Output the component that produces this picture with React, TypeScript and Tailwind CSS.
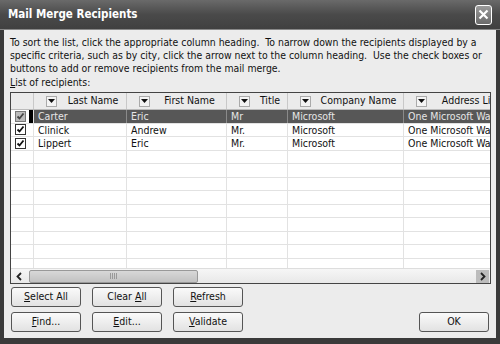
import React from "react";

const cols = [
  { w: "w-[93px]", label: "Last Name" },
  { w: "w-[100px]", label: "First Name" },
  { w: "w-[61px]", label: "Title" },
  { w: "w-[116px]", label: "Company Name" },
  { w: "w-[120px]", label: "Address Line 1" },
];

const rows = [
  ["Carter", "Eric", "Mr", "Microsoft", "One Microsoft Way"],
  ["Clinick", "Andrew", "Mr.", "Microsoft", "One Microsoft Way"],
  ["Lippert", "Eric", "Mr.", "Microsoft", "One Microsoft Way"],
];

function Check({ dim }: { dim?: boolean }) {
  return (
    <div
      className={`w-[11px] h-[11px] border flex items-center justify-center ${
        dim ? "border-[#777] bg-[#bbb]" : "border-[#333] bg-white"
      }`}
    >
      <svg width="9" height="9" viewBox="0 0 9 9">
        <path d="M1.5 4.5 L3.5 6.5 L7.5 1.5" stroke={dim ? "#444" : "#111"} strokeWidth="1.8" fill="none" />
      </svg>
    </div>
  );
}

function Drop() {
  return (
    <div className="w-[11px] h-[11px] border border-[#aaa] bg-[#f4f4f4] flex items-center justify-center shrink-0">
      <svg width="7" height="4" viewBox="0 0 7 4">
        <path d="M0 0 H7 L3.5 4 Z" fill="#111" />
      </svg>
    </div>
  );
}

function Btn({ children, w = "w-[70px]" }: { children: React.ReactNode; w?: string }) {
  return (
    <div
      className={`${w} h-[20px] rounded-[3px] border border-[#555] bg-gradient-to-b from-[#fafafa] to-[#e2e2e2] flex items-center justify-center text-[10.5px] text-[#111]`}
    >
      {children}
    </div>
  );
}

export default function App() {
  return (
    <div
      className="w-[500px] h-[344px] bg-[#3a3a3a] flex flex-col overflow-hidden"
      style={{ fontFamily: "'DejaVu Sans Condensed', 'Liberation Sans', sans-serif" }}
    >
      {/* title bar */}
      <div className="h-[30px] shrink-0 bg-gradient-to-b from-[#6a6a6a] via-[#4a4a4a] to-[#404040] flex items-center justify-between pl-[8px] pr-[8px] border-b border-[#888]">
        <span className="text-white font-bold text-[11.5px]">Mail Merge Recipients</span>
        <div className="w-[17px] h-[20px] rounded-[3px] border border-white bg-gradient-to-b from-[#9a9a9a] to-[#6a6a6a] flex items-center justify-center">
          <svg width="11" height="11" viewBox="0 0 11 11">
            <path d="M1.5 1.5 L9.5 9.5 M9.5 1.5 L1.5 9.5" stroke="white" strokeWidth="2.2" />
          </svg>
        </div>
      </div>

      {/* body */}
      <div className="flex-1 mx-[4px] mb-[6px] bg-[#ececec] flex flex-col px-[6px] pt-[6px]">
        <div className="text-[10.4px] leading-[13px] text-[#111] whitespace-nowrap">
          <div>To sort the list, click the appropriate column heading.&nbsp; To narrow down the recipients displayed by a</div>
          <div>specific criteria, such as by city, click the arrow next to the column heading.&nbsp; Use the check boxes or</div>
          <div>buttons to add or remove recipients from the mail merge.</div>
          <div className="mt-[1px]">
            <span className="underline">L</span>ist of recipients:
          </div>
        </div>

        {/* table */}
        <div className="mt-[3px] w-[481px] h-[192px] border border-[#444] bg-white flex flex-col overflow-hidden">
          <div className="h-[17px] shrink-0 flex bg-[#ebebeb] border-b border-[#bbb] text-[10.5px] text-[#111]">
            <div className="w-[23px] shrink-0 border-r border-[#c8c8c8]" />
            {cols.map((c) => (
              <div key={c.label} className={`${c.w} shrink-0 border-r border-[#c8c8c8] flex items-center pl-[12px] gap-[9px] whitespace-nowrap overflow-hidden`}>
                <Drop />
                <span className="flex-1 text-center pr-[6px]">{c.label}</span>
              </div>
            ))}
          </div>
          <div className="flex-1 overflow-hidden">
            {Array.from({ length: 12 }).map((_, i) => {
              const r = rows[i];
              const sel = i === 0;
              return (
                <div key={i} className="h-[13.5px] flex border-b border-[#e2e2e2] text-[10.5px] leading-[13px]">
                  <div className="w-[23px] shrink-0 border-r border-[#e2e2e2] flex items-center pl-[4px] relative">
                    {r && <Check dim={sel} />}
                    {sel && <div className="absolute right-0 top-0 bottom-0 w-[4px] bg-black" />}
                  </div>
                  {cols.map((c, j) => (
                    <div
                      key={j}
                      className={`${c.w} shrink-0 border-r whitespace-nowrap overflow-hidden pl-[4px] ${
                        sel ? "bg-[#575757] text-[#e6e6e6] border-[#8a8a8a]" : "text-[#111] border-[#e2e2e2]"
                      }`}
                    >
                      {r ? r[j] : ""}
                    </div>
                  ))}
                </div>
              );
            })}
          </div>
          {/* horizontal scrollbar */}
          <div className="h-[15px] shrink-0 flex items-center bg-gradient-to-b from-[#f6f6f6] to-[#e8e8e8] border-t border-[#ddd]">
            <div className="w-[16px] h-[15px] flex items-center justify-center">
              <svg width="6" height="9" viewBox="0 0 6 9">
                <path d="M5 1 L1.5 4.5 L5 8" stroke="#222" strokeWidth="1.8" fill="none" />
              </svg>
            </div>
            <div className="w-[169px] h-[13px] ml-[2px] rounded-[2px] border border-[#999] bg-gradient-to-b from-[#d8d8d8] to-[#c2c2c2] flex items-center justify-center">
              <div className="flex gap-[1px]">
                <div className="w-[1px] h-[6px] bg-[#999]" />
                <div className="w-[1px] h-[6px] bg-[#999]" />
                <div className="w-[1px] h-[6px] bg-[#999]" />
                <div className="w-[1px] h-[6px] bg-[#999]" />
              </div>
            </div>
            <div className="flex-1" />
            <div className="w-[13px] h-[13px] mr-[1px] bg-[#bcbcbc] flex items-center justify-center">
              <svg width="6" height="9" viewBox="0 0 6 9">
                <path d="M1 1 L4.5 4.5 L1 8" stroke="#222" strokeWidth="1.8" fill="none" />
              </svg>
            </div>
          </div>
        </div>

        {/* buttons */}
        <div className="mt-[3px] flex flex-col gap-[5px] pl-[1px]">
          <div className="flex gap-[11px]">
            <Btn><span><span className="underline">S</span>elect All</span></Btn>
            <Btn><span>Clear <span className="underline">A</span>ll</span></Btn>
            <Btn><span><span className="underline">R</span>efresh</span></Btn>
          </div>
          <div className="flex gap-[11px]">
            <Btn><span><span className="underline">F</span>ind...</span></Btn>
            <Btn><span><span className="underline">E</span>dit...</span></Btn>
            <Btn><span><span className="underline">V</span>alidate</span></Btn>
            <div className="flex-1" />
            <div className="mr-[1px]">
              <Btn>OK</Btn>
            </div>
          </div>
        </div>
      </div>
    </div>
  );
}
